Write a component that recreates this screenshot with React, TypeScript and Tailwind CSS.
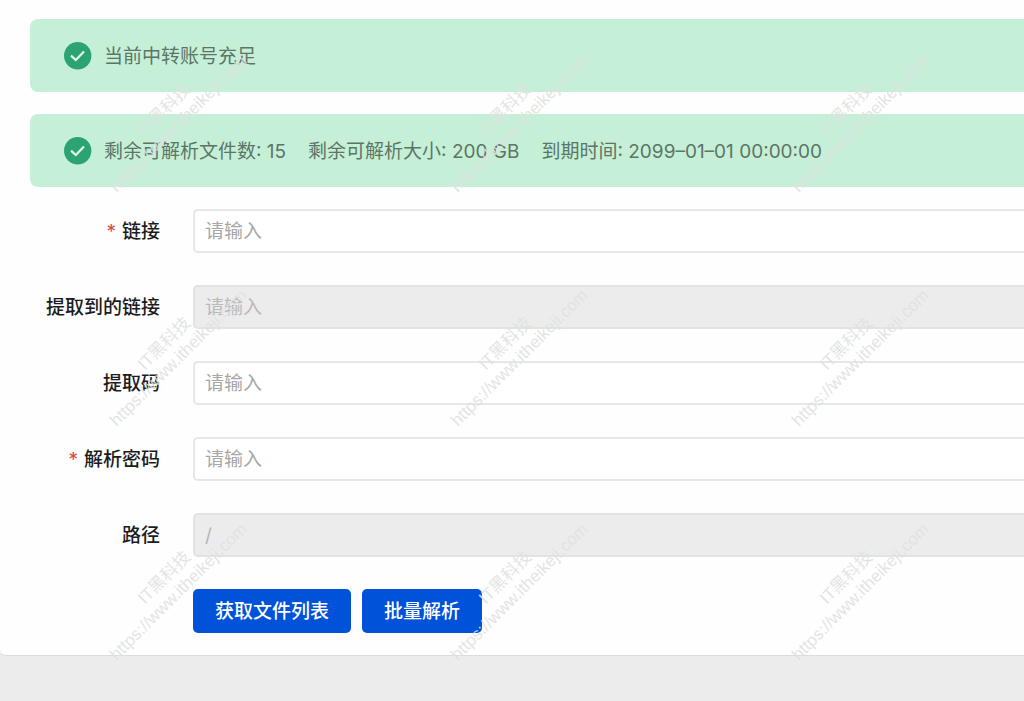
import React, { useState } from 'react';

const fontStack = "font-['Inter','Noto_Sans_CJK_SC',sans-serif]";

const SuccessAlert: React.FC<{ children: React.ReactNode }> = ({ children }) => (
  <div role="status" className="flex items-center gap-3 h-[73px] pl-[34px] rounded-l-lg bg-[#c5f0d7] text-[#5c7566]">
    <svg viewBox="0 0 28 28" className="w-7 h-7 shrink-0" fill="none" aria-hidden="true">
      <circle cx="13.7" cy="13.7" r="13.7" fill="#2ba471" />
      <path d="M7 13.6 L11.8 18 L20 9.6" stroke="#e3f9e9" strokeWidth="2.2" />
    </svg>
    <div className="flex gap-[22px] pt-0.5 whitespace-pre">{children}</div>
  </div>
);

interface FieldProps {
  id: string;
  label: string;
  required?: boolean;
  disabled?: boolean;
  initial?: string;
}

const Field: React.FC<FieldProps> = ({ id, label, required, disabled, initial = '' }) => {
  const [value, setValue] = useState(initial);

  return (
    <div className="flex items-center">
      <label htmlFor={id} className="w-[130px] shrink-0 mr-[33px] pt-0.5 text-right font-medium text-[#1c1c1c]">
        {required && <span className="text-[#d54941] font-normal mr-1.5">*</span>}
        {label}
      </label>
      <input
        id={id}
        type="text"
        value={value}
        onChange={e => setValue(e.target.value)}
        placeholder="请输入"
        required={required}
        disabled={disabled}
        className="flex-1 min-w-0 h-11 px-2.5 border-2 border-r-0 border-[#e5e8e7] rounded-l-[5px] bg-white placeholder:text-[#a6a6a6] disabled:bg-[#ececec] disabled:border-[#e2e3e3] disabled:text-[#b5b5b5] disabled:placeholder:text-[#b9b9b9]"
      />
    </div>
  );
};

const Watermark: React.FC = () => (
  <div
    aria-hidden="true"
    className="absolute inset-0 overflow-hidden pointer-events-none select-none grid grid-cols-[repeat(auto-fill,341px)] auto-rows-[234px] text-[17px] leading-5 text-[#dfe2e1]/90"
  >
    {Array.from({ length: 9 }, (_, i) => (
      <div key={i} className="flex items-center justify-center pl-0.5">
        <div className="-rotate-45 text-center whitespace-nowrap font-['Liberation_Sans','Noto_Sans_CJK_SC',sans-serif]">
          <div>IT黑科技</div>
          <div>https://www.itheikeji.com</div>
        </div>
      </div>
    ))}
  </div>
);

const App: React.FC = () => {
  return (
    <div className={`relative min-h-screen bg-[#ececec] text-[19px] leading-7 ${fontStack}`}>
      <main className="bg-[#fefefe] border-b border-[#dcdcdc] rounded-bl-md pt-[19px] pb-[22px] pl-[30px]">
        <div className="flex flex-col gap-[22px]">
          <SuccessAlert>
            <span>当前中转账号充足</span>
          </SuccessAlert>
          <SuccessAlert>
            <span>剩余可解析文件数: 15</span>
            <span>剩余可解析大小: 200 GB</span>
            <span>到期时间: 2099–01–01 00:00:00</span>
          </SuccessAlert>
        </div>

        <form className="mt-[22px] flex flex-col gap-8" onSubmit={e => e.preventDefault()}>
          <Field id="link" label="链接" required />
          <Field id="extracted-link" label="提取到的链接" disabled />
          <Field id="code" label="提取码" />
          <Field id="password" label="解析密码" required />
          <Field id="path" label="路径" initial="/" disabled />
          <div className="flex gap-[11px] pl-[163px]">
            <button type="submit" className="h-11 px-[22px] pt-0.5 rounded-[5px] bg-[#0052d9] text-white font-medium">
              获取文件列表
            </button>
            <button type="button" className="h-11 px-[22px] pt-0.5 rounded-[5px] bg-[#0052d9] text-white font-medium">
              批量解析
            </button>
          </div>
        </form>
      </main>
      <Watermark />
    </div>
  );
};

export default App;
